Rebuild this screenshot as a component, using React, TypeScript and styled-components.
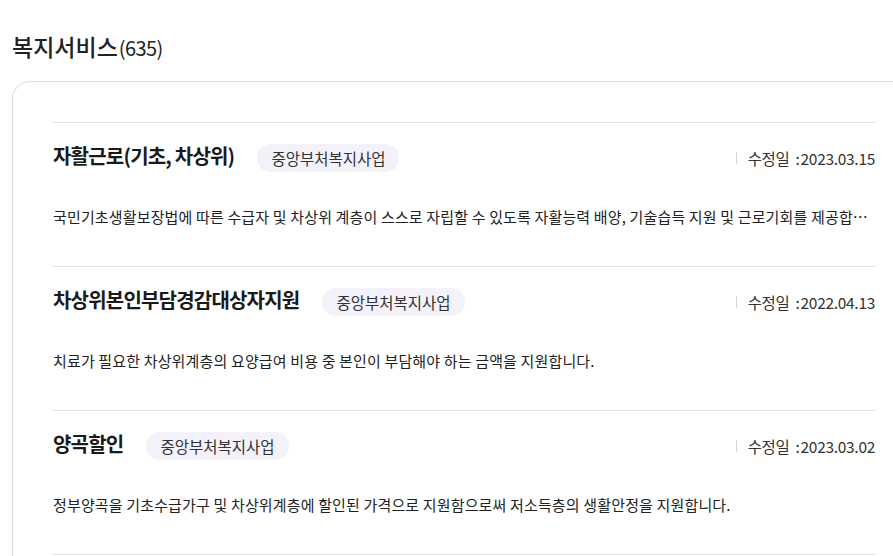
import React from "react";
import styled, { createGlobalStyle } from "styled-components";

const Global = createGlobalStyle`
  html, body { margin: 0; padding: 0; background: #fff; }
  body { font-family: "Noto Sans CJK KR", "Noto Sans", sans-serif; color: #222; overflow: hidden; }
`;

const Page = styled.div`
  padding: 29px 0 0 12px;
  width: 893px;
  box-sizing: border-box;
`;

const Heading = styled.h2`
  margin: 0 0 16px 0;
  font-size: 23px;
  font-weight: 500;
  color: #222;
  letter-spacing: 0;
  line-height: 34px;
  display: flex;
  align-items: baseline;
  gap: 1px;
`;

const Count = styled.span`
  font-size: 20px;
  font-weight: 400;
  letter-spacing: -0.6px;
`;

const Card = styled.div`
  border: 1px solid #dedede;
  border-right: none;
  border-radius: 18px 0 0 0;
  padding: 40px 18px 0 40px;
  margin-right: -20px;
  min-height: 600px;
`;

const List = styled.ul`
  list-style: none;
  margin: 0;
  padding: 0;
  border-top: 1px solid #e2e2e2;
  width: 822px;
`;

const Item = styled.li`
  border-bottom: 1px solid #e2e2e2;
  padding: 21px 0 0 0;
  height: 144px;
  box-sizing: border-box;
`;

const Row = styled.div`
  display: flex;
  align-items: flex-start;
  height: 29px;
`;

const Title = styled.h3`
  margin: 0;
  font-size: 20px;
  font-weight: 700;
  letter-spacing: -0.8px;
  line-height: 24px;
  color: #1a1a1a;
`;

const Badge = styled.span`
  margin-left: 23px;
  height: 28px;
  padding: 0 14px;
  border-radius: 14px;
  background: #f3f2fa;
  color: #333;
  font-size: 15.5px;
  line-height: 28px;
  letter-spacing: 0;
  white-space: nowrap;
`;

const DateBox = styled.div`
  margin-left: auto;
  display: flex;
  align-items: center;
  height: 28px;
  font-size: 15.5px;
  color: #333;
  letter-spacing: -0.3px;
  &::before {
    content: "";
    width: 1px;
    height: 12px;
    background: #d4d4d4;
    margin-right: 11px;
  }
`;

const Colon = styled.span`
  margin: 0 1px 0 6px;
`;

const Desc = styled.p`
  margin: 33px 0 0 0;
  font-size: 15px;
  line-height: 21px;
  color: #222;
  letter-spacing: 0.15px;
  white-space: nowrap;
  overflow: hidden;
  text-overflow: ellipsis;
`;

const items = [
  {
    title: "자활근로(기초, 차상위)",
    badge: "중앙부처복지사업",
    date: "2023.03.15",
    desc: "국민기초생활보장법에 따른 수급자 및 차상위 계층이 스스로 자립할 수 있도록 자활능력 배양, 기술습득 지원 및 근로기회를 제공합니다.",
  },
  {
    title: "차상위본인부담경감대상자지원",
    badge: "중앙부처복지사업",
    date: "2022.04.13",
    desc: "치료가 필요한 차상위계층의 요양급여 비용 중 본인이 부담해야 하는 금액을 지원합니다.",
  },
  {
    title: "양곡할인",
    badge: "중앙부처복지사업",
    date: "2023.03.02",
    desc: "정부양곡을 기초수급가구 및 차상위계층에 할인된 가격으로 지원함으로써 저소득층의 생활안정을 지원합니다.",
  },
];

export default function App() {
  return (
    <Page>
      <Global />
      <Heading>
        복지서비스<Count>(635)</Count>
      </Heading>
      <Card>
        <List>
          {items.map((it) => (
            <Item key={it.title}>
              <Row>
                <Title>{it.title}</Title>
                <Badge>{it.badge}</Badge>
                <DateBox>
                  수정일<Colon>:</Colon>
                  {it.date}
                </DateBox>
              </Row>
              <Desc title={it.desc}>{it.desc}</Desc>
            </Item>
          ))}
        </List>
      </Card>
    </Page>
  );
}
